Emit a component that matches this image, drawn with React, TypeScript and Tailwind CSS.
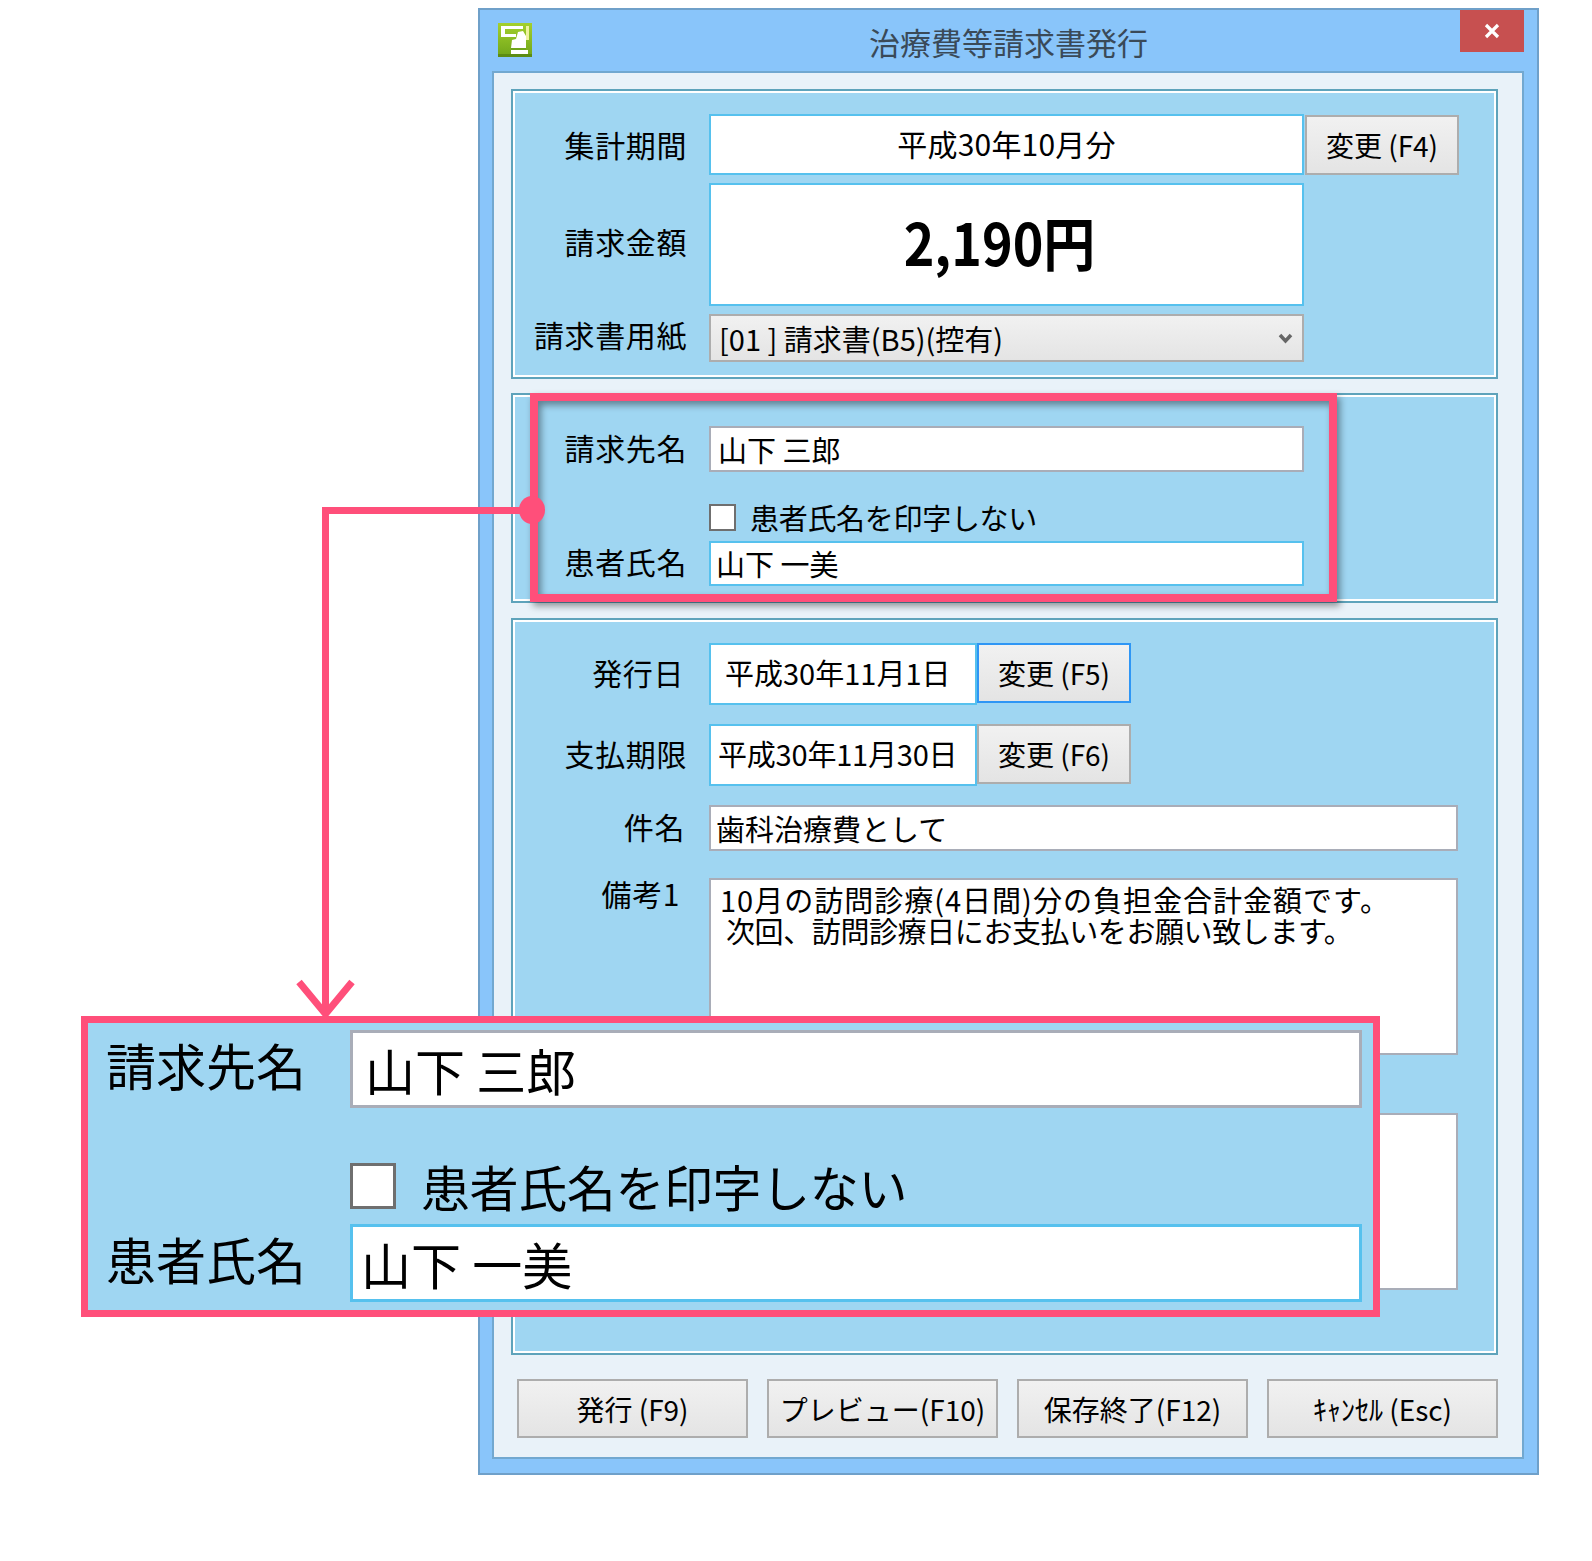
import type { ReactNode } from "react";

const labelCls = "shrink-0 text-right whitespace-nowrap leading-none";

// form label + control column, label column ends at the same x in every group
const Label = ({ children, className = "" }: { children: ReactNode; className?: string }) => (
  <div className={`w-[172px] text-[30px] tracking-[0.6px] ${labelCls} ${className}`}>{children}</div>
);

const Field = ({
  children,
  className = "",
}: {
  children?: ReactNode;
  className?: string;
}) => (
  <div className={`flex items-center bg-white border-2 text-[29px] leading-none whitespace-nowrap ${className}`}>
    {children}
  </div>
);

const Btn = ({ children, className = "" }: { children: ReactNode; className?: string }) => (
  <div
    className={`flex items-center justify-center shrink-0 border-2 bg-gradient-to-b from-[#f1f1f1] to-[#e4e4e4] text-[28px] leading-none whitespace-nowrap ${className}`}
  >
    {children}
  </div>
);

const Group = ({ children, className = "" }: { children: ReactNode; className?: string }) => (
  <div className={`w-[987px] border-2 border-[#5ea3bb] ${className}`}>
    <div className="h-full border-2 border-white bg-[#9fd6f2]">{children}</div>
  </div>
);

const AppIcon = () => (
  <svg width="34" height="34" viewBox="0 0 34 34">
    <defs>
      <linearGradient id="ico" x1="0" y1="0" x2="0" y2="1">
        <stop offset="0" stopColor="#a4d02c" />
        <stop offset="1" stopColor="#6fa51a" />
      </linearGradient>
    </defs>
    <rect width="34" height="34" fill="url(#ico)" />
    <rect x="0" y="31" width="34" height="3" fill="#5c8c14" />
    <path d="M3 3H25V6H7V11H18V14H3Z" fill="#fff" />
    <rect x="28" y="3" width="3" height="14" fill="#eef2a0" />
    <path d="M14 17L18 16L20 9L25 8L28 13V25H13Z" fill="#fff" />
    <rect x="13" y="25" width="15" height="2" fill="#6fa51a" />
    <rect x="13" y="27" width="17" height="4" fill="#fff" />
  </svg>
);

export default function App() {
  return (
    <div className="relative w-[1592px] h-[1561px] bg-white overflow-hidden pt-[8px] pl-[478px] text-black font-['Noto_Sans_CJK_JP','Liberation_Sans',sans-serif]">
      {/* dialog */}
      <div className="w-[1061px] h-[1467px] border-2 border-[#6fa0c9] bg-[#89c5fa]">
        <div className="grid grid-cols-[1fr_auto_1fr] h-[61px]">
          <div className="pl-[18px] pt-[13px]">
            <AppIcon />
          </div>
          <div className="pt-[13px] text-[31px] leading-[38px] text-[#3a4a58] whitespace-nowrap">治療費等請求書発行</div>
          <div className="flex justify-end pr-[13px]">
            <div className="flex items-center justify-center w-[64px] h-[42px] bg-[#c75050]">
              <svg width="16" height="16" viewBox="0 0 16 16">
                <path d="M2 2L14 14M14 2L2 14" stroke="#fff" strokeWidth="3.2" />
              </svg>
            </div>
          </div>
        </div>

        <div className="ml-[12px] w-[1032px] h-[1388px] border-2 border-[#72a8d0] bg-[#e9f2f9] pt-[16px] pl-[17px]">
          {/* period / amount */}
          <Group className="h-[290px]">
            <div className="pt-[21px] flex flex-col gap-[8px]">
              <div className="flex items-center gap-[22px] h-[61px]">
                <Label className="mb-[2px]">集計期間</Label>
                <Field className="w-[595px] h-[61px] border-[#56c1ee] justify-center">
                  <span className="text-[30px] tracking-[0.2px] mb-[4px]">平成30年10月分</span>
                </Field>
                <Btn className="-ml-[21px] w-[154px] h-[60px] border-[#adadad]">変更 (F4)</Btn>
              </div>
              <div className="flex items-center gap-[22px] h-[123px]">
                <Label className="mb-[8px]">請求金額</Label>
                <Field className="w-[595px] h-[123px] border-[#56c1ee] justify-center">
                  <span className="inline-block text-[52px] font-bold scale-y-[1.12] pr-[14px] mb-[8px]">2,190円</span>
                </Field>
              </div>
              <div className="flex items-center gap-[22px] h-[48px]">
                <Label className="mb-[8px]">請求書用紙</Label>
                <div className="flex items-center justify-between w-[595px] h-[48px] border-2 border-[#adadad] bg-gradient-to-b from-[#f1f1f1] to-[#e4e4e4] pl-[8px] pr-[9px] text-[29px] leading-none whitespace-nowrap">
                  <span>[01 ] 請求書(B5)(控有)</span>
                  <svg width="15" height="13" viewBox="0 0 15 13">
                    <path d="M2 3L7.500 9L13 3" fill="none" stroke="#666" strokeWidth="3.5" />
                  </svg>
                </div>
              </div>
            </div>
          </Group>

          {/* names */}
          <Group className="h-[210px] mt-[14px]">
            <div className="pt-[29px]">
              <div className="flex items-center gap-[22px]">
                <Label className="mb-[4px]">請求先名</Label>
                <Field className="w-[595px] h-[46px] border-[#a9adb8] pl-[7px]">山下 三郎</Field>
              </div>
              <div className="flex items-center gap-[14px] mt-[31px] ml-[194px]">
                <div className="w-[27px] h-[27px] border-2 border-[#6f6f6f] bg-white" />
                <span className="text-[29px] leading-none tracking-[-0.3px] whitespace-nowrap">患者氏名を印字しない</span>
              </div>
              <div className="flex items-center gap-[22px] mt-[9px]">
                <Label className="mb-[6px]">患者氏名</Label>
                <Field className="w-[595px] h-[45px] border-[#56c1ee] pl-[5px]">山下 一美</Field>
              </div>
            </div>
          </Group>

          {/* issue details */}
          <Group className="h-[737px] mt-[15px]">
            <div className="pt-[21px]">
              <div className="flex items-start gap-[22px]">
                <Label className="mt-[14px] pr-[3px]">発行日</Label>
                <Field className="w-[268px] h-[62px] border-[#56c1ee] pl-[14px]">
                  <span className="text-[29px] mb-[4px]">平成30年11月1日</span>
                </Field>
                <Btn className="-ml-[22px] w-[154px] h-[60px] border-[#2e96f5]">変更 (F5)</Btn>
              </div>
              <div className="flex items-start gap-[22px] mt-[19px]">
                <Label className="mt-[14px]">支払期限</Label>
                <Field className="w-[268px] h-[62px] border-[#56c1ee] pl-[7px]">
                  <span className="text-[29px] tracking-[-0.2px] mb-[4px]">平成30年11月30日</span>
                </Field>
                <Btn className="-ml-[22px] w-[154px] h-[60px] border-[#adadad]">変更 (F6)</Btn>
              </div>
              <div className="flex items-center gap-[22px] mt-[19px]">
                <Label className="pr-[2px] mb-[4px]">件名</Label>
                <Field className="w-[749px] h-[46px] border-[#a9adb8] pl-[5px]">歯科治療費として</Field>
              </div>
              <div className="flex items-start gap-[22px] mt-[27px]">
                <Label className="pr-[7px]">備考1</Label>
                <div className="w-[749px] h-[177px] border-2 border-[#a9adb8] bg-white pt-[4px] pl-[9px] text-[29px] leading-[31px] whitespace-nowrap">
                  <div className="tracking-[1px]">10月の訪問診療(4日間)分の負担金合計金額です。</div>
                  <div className="pl-[6px] tracking-[-0.4px]">次回、訪問診療日にお支払いをお願い致します。</div>
                </div>
              </div>
              <div className="flex items-start gap-[22px] mt-[58px]">
                <Label className="pr-[7px]">備考2</Label>
                <div className="w-[749px] h-[177px] border-2 border-[#a9adb8] bg-white" />
              </div>
            </div>
          </Group>

          <div className="flex gap-[19px] mt-[24px] ml-[6px]">
            <Btn className="w-[231px] h-[59px] border-[#adadad]">発行 (F9)</Btn>
            <Btn className="w-[231px] h-[59px] border-[#adadad]">プレビュー(F10)</Btn>
            <Btn className="w-[231px] h-[59px] border-[#adadad]">保存終了(F12)</Btn>
            <Btn className="w-[231px] h-[59px] border-[#adadad]">ｷｬﾝｾﾙ (Esc)</Btn>
          </div>
        </div>
      </div>

      {/* annotation: highlight frame */}
      <div className="absolute left-[530px] top-[393px] w-[807px] h-[209px] border-[8px] border-[#ff4f7a] shadow-[3px_4px_7px_rgba(0,0,0,0.4),inset_3px_4px_7px_rgba(0,0,0,0.4)]" />

      {/* annotation: connector and arrow */}
      <svg className="absolute left-0 top-0 pointer-events-none" width="1592" height="1561" viewBox="0 0 1592 1561">
        <path d="M532 510.500H325.500V1012" fill="none" stroke="#ff4f7a" strokeWidth="7" />
        <path d="M299 982L325.500 1014L352 982" fill="none" stroke="#ff4f7a" strokeWidth="7" />
        <ellipse cx="532" cy="510" rx="13" ry="14" fill="#ff4f7a" />
      </svg>

      {/* annotation: enlarged copy */}
      <div className="absolute left-[81px] top-[1016px] w-[1299px] h-[301px] border-[7px] border-[#ff4f7a] bg-[#9fd6f2] pt-[7px]">
        <div className="flex items-center gap-[42px] pl-[18px]">
          <div className="w-[202px] text-[50px] leading-none whitespace-nowrap mb-[10px]">請求先名</div>
          <div className="flex items-center w-[1012px] h-[78px] border-[3px] border-[#a9adb8] bg-white pl-[12px] text-[50px] leading-none whitespace-nowrap">
            山下 三郎
          </div>
        </div>
        <div className="flex items-center gap-[25px] ml-[262px] mt-[53px]">
          <div className="w-[46px] h-[46px] border-[3px] border-[#6f6f6f] bg-white" />
          <span className="text-[49px] leading-none tracking-[-0.4px] whitespace-nowrap">患者氏名を印字しない</span>
        </div>
        <div className="flex items-center gap-[42px] pl-[18px] mt-[14px]">
          <div className="w-[202px] text-[50px] leading-none whitespace-nowrap mb-[10px]">患者氏名</div>
          <div className="flex items-center w-[1012px] h-[78px] border-[3px] border-[#56c1ee] bg-white pl-[8px] text-[50px] leading-none whitespace-nowrap">
            山下 一美
          </div>
        </div>
      </div>
    </div>
  );
}
